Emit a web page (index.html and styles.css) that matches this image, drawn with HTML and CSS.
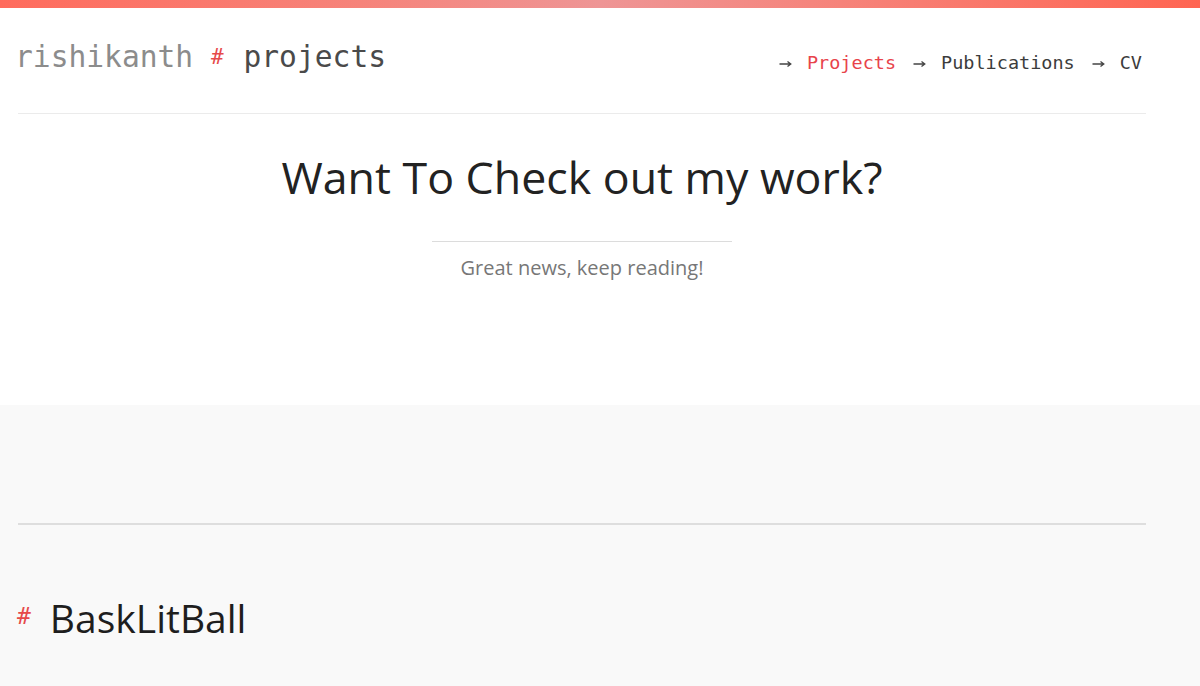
FILE: index.html
```html
<!DOCTYPE html>
<html>
<head>
<meta charset="utf-8">
<link rel="stylesheet" href="styles.css">
</head>
<body>
<div class="topbar"></div>
<header class="container header">
  <div class="logo"><span class="logo-name">rishikanth</span> <span class="logo-hash">#</span> <span class="logo-page">projects</span></div>
  <nav class="nav">
    <a class="nav-item active"><svg class="arrow" width="13" height="8" viewBox="0 0 13 8"><path d="M0.5 4H11.5M8.5 1.5L11.8 4L8.5 6.5" fill="none" stroke="#444" stroke-width="1.3"/></svg>Projects</a>
    <a class="nav-item"><svg class="arrow" width="13" height="8" viewBox="0 0 13 8"><path d="M0.5 4H11.5M8.5 1.5L11.8 4L8.5 6.5" fill="none" stroke="#444" stroke-width="1.3"/></svg>Publications</a>
    <a class="nav-item"><svg class="arrow" width="13" height="8" viewBox="0 0 13 8"><path d="M0.5 4H11.5M8.5 1.5L11.8 4L8.5 6.5" fill="none" stroke="#444" stroke-width="1.3"/></svg>CV</a>
  </nav>
</header>
<section class="container intro">
  <h1 class="intro-title">Want To Check out my work?</h1>
  <hr class="intro-rule">
  <p class="intro-sub">Great news, keep reading!</p>
</section>
<main class="projects">
  <div class="container">
    <hr class="section-rule">
    <h2 class="project-title"><span class="project-hash">#</span>BaskLitBall</h2>
  </div>
</main>
</body>
</html>
```
FILE: styles.css
```css
html, body {
  margin: 0;
  padding: 0;
  background: #fff;
}
body {
  font-family: "Open Sans", sans-serif;
  color: #222;
  overflow: hidden;
  height: 686px;
}
.topbar {
  height: 8px;
  background: linear-gradient(90deg, #ff6b5c 0%, #f6837a 30%, #ee9595 50%, #f6837a 70%, #ff6552 100%);
}
.container {
  width: 1128px;
  margin-left: 18px;
}
.header {
  display: flex;
  justify-content: space-between;
  align-items: flex-start;
  border-bottom: 1px solid #ebebeb;
  box-sizing: border-box;
  height: 106px;
}
.logo {
  font-family: "DejaVu Sans Mono", monospace;
  font-size: 29.6px;
  margin-left: -3px;
  margin-top: 29px;
  line-height: 40px;
}
.logo-name { color: #8c8c8c; }
.logo-hash {
  color: #e64a4a;
  font-size: 21px;
  vertical-align: 3px;
  margin-right: 2px;
}
.logo-page { color: #4a4a4a; }
.nav {
  font-family: "DejaVu Sans Mono", monospace;
  font-size: 18.5px;
  margin-top: 40px;
  line-height: 30px;
  display: flex;
  margin-right: 4px;
}
.nav-item {
  color: #3c3c3c;
  margin-left: 17px;
  display: flex;
  align-items: center;
}
.nav-item.active { color: #e8434a; }
.arrow {
  margin-right: 15px;
  margin-top: 1px;
}
.intro {
  text-align: center;
  height: 291px;
}
.intro-title {
  margin: 0;
  padding-top: 33px;
  font-size: 44.7px;
  font-weight: 400;
  line-height: 60px;
  color: #222;
}
.intro-rule {
  width: 300px;
  margin: 34px auto 0;
  border: 0;
  border-top: 1px solid #dcdcdc;
}
.intro-sub {
  margin: 13px 0 0;
  font-size: 20px;
  color: #777;
  line-height: 26px;
}
.projects {
  background: #f9f9f9;
  padding-top: 118px;
  box-sizing: border-box;
  height: 281px;
}
.section-rule {
  margin: 0;
  border: 0;
  border-top: 2px solid #dedede;
}
.project-title {
  margin: 65px 0 0;
  font-size: 39px;
  font-weight: 400;
  line-height: 56px;
  color: #1e1e1e;
  display: flex;
  align-items: center;
}
.project-hash {
  font-family: "DejaVu Sans Mono", monospace;
  color: #e64a4a;
  font-size: 23px;
  margin-left: -1px;
  margin-right: 19px;
  position: relative;
  top: -2px;
}
```
